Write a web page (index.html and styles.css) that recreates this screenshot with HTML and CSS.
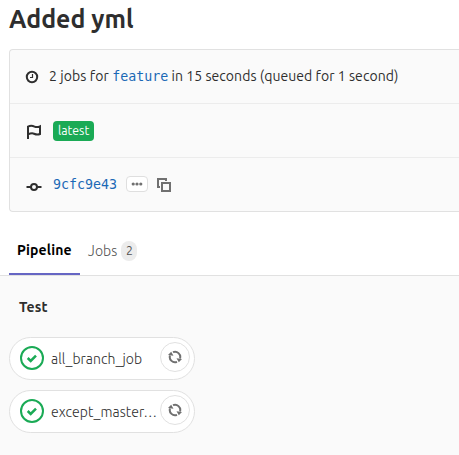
FILE: index.html
```html
<!DOCTYPE html>
<html lang="en">
<head>
<meta charset="utf-8">
<title>Added yml</title>
<link rel="stylesheet" href="styles.css">
</head>
<body>
<h1 class="title">Added yml</h1>
<section class="info">
  <div class="row">
    <svg class="icon clock" width="14" height="14" viewBox="0 0 14 14"><circle cx="7" cy="7" r="5.2"/><path d="M7.500 4v3.500H5"/></svg>
    <p class="summary">2 jobs for <a class="mono">feature</a> <span class="timing">in 15 seconds (queued for 1 second)</span></p>
  </div>
  <div class="row">
    <svg class="icon flag" width="16" height="16" viewBox="0 0 16 16"><path d="M2 15V2.6C5 1.2 6.500 1.700 8.500 2.600S12 3.200 14 2.300V10C11.500 11 10 10.500 8 9.700S4.500 9.300 2 10.400"/></svg>
    <span class="badge">latest</span>
  </div>
  <div class="row">
    <svg class="icon commit" width="16" height="16" viewBox="0 0 16 16"><circle cx="8" cy="8" r="3"/><path d="M0.500 8H5M11 8h4.500"/></svg>
    <a class="mono sha">9cfc9e43</a>
    <span class="more"><svg width="12" height="4" viewBox="0 0 12 4"><circle cx="2.200" cy="2" r="1.600"/><circle cx="6" cy="2" r="1.600"/><circle cx="9.800" cy="2" r="1.600"/></svg></span>
    <svg class="copy" width="14" height="14" viewBox="0 0 14 14"><path d="M3 9H1V1h8v2M5 5h8v8H5z"/></svg>
  </div>
</section>
<nav class="tabs">
  <a class="tab active"><span>Pipeline</span></a>
  <a class="tab"><span class="jobs">Jobs</span><span class="count">2</span></a>
</nav>
<main class="graph">
  <h2 class="stage">Test</h2>
  <div class="job">
    <svg class="check" width="24" height="24" viewBox="0 0 24 24"><circle cx="12" cy="12" r="11"/><path d="M7.700 12l3 3 5.300-5.300"/></svg>
    <span class="name">all_branch_job</span>
    <span class="retry"><svg width="14" height="14" viewBox="0 0 14 14"><path d="M5 2.200A5.200 5.200 0 0 1 12 8.500M9 11.800A5.200 5.200 0 0 1 2 5.500"/><path class="tip" d="M8.500 8.200l5.500.8-3.200 3.200zM5.500 5.800L0 5 3.200 1.800z"/></svg></span>
  </div>
  <div class="job">
    <svg class="check" width="24" height="24" viewBox="0 0 24 24"><circle cx="12" cy="12" r="11"/><path d="M7.700 12l3 3 5.300-5.300"/></svg>
    <span class="name">except_master…</span>
    <span class="retry"><svg width="14" height="14" viewBox="0 0 14 14"><path d="M5 2.200A5.200 5.200 0 0 1 12 8.500M9 11.800A5.200 5.200 0 0 1 2 5.500"/><path class="tip" d="M8.500 8.200l5.500.8-3.200 3.200zM5.500 5.800L0 5 3.200 1.800z"/></svg></span>
  </div>
</main>
</body>
</html>
```
FILE: styles.css
```css
* { box-sizing: border-box; }
body {
  margin: 0;
  height: 455px;
  overflow: hidden;
  display: flex;
  flex-direction: column;
  background: #fff;
  color: #2e2e2e;
  font: 14px/20px Ubuntu, "Noto Sans", sans-serif;
}
svg { flex: none; fill: none; }
.title { margin: 0; padding: 4px 0 0 9px; height: 49px; font-size: 24.9px; line-height: 30px; font-weight: 700; }
.info {
  margin-left: 9px;
  height: 163px;
  border: 1px solid #e1e1e1;
  border-right: 0;
  border-radius: 4px 0 0 4px;
  background: #fafafa;
}
.row { display: flex; align-items: center; height: 54px; padding-left: 15px; border-bottom: 1px solid #ececec; }
.row:last-child { border-bottom: 0; height: 53px; }
.icon { stroke: #2e2e2e; stroke-width: 2; }
.clock { margin-right: 10px; }
.clock path { stroke-width: 1.2; }
.flag, .commit { margin: 3px 11px 0 1px; }
.commit { margin-top: 5px; }
.summary { margin: 0; white-space: nowrap; letter-spacing: 0.09px; }
.timing { letter-spacing: 0.05px; }
.mono { color: #1b69b6; font: 13.3px/20px "DejaVu Sans Mono", monospace; letter-spacing: 0; }
.badge { height: 20px; padding: 0 5px; border-radius: 4px; background: #1aaa55; color: #fff; font-size: 12.250px; line-height: 19px; }
.more { display: flex; align-items: center; justify-content: center; width: 22px; height: 16px; margin: 0 9px; border: 1px solid #dfdfdf; border-radius: 4px; background: #fff; position: relative; top: -1px; }
.more svg { fill: #707070; }
.copy { stroke: #707070; stroke-width: 2; }
.tabs { display: flex; height: 64px; padding: 12px 0 0 9px; border-bottom: 1px solid #e1e1e1; }
.tab { display: flex; align-items: center; height: 51px; padding: 2px 8px 0; color: #707070; }
.active { width: 71px; color: #000; font-weight: 700; border-bottom: 2px solid #6666c4; letter-spacing: 0.15px; }
.jobs { letter-spacing: 0.1px; font-weight: 300; color: #505050; }
.count { width: 16px; height: 20px; margin-left: 4px; border-radius: 10px; background: #ececec; color: #505050; font-size: 12.250px; line-height: 20px; text-align: center; }
.graph { flex: 1; padding: 21px 0 0 9px; background: #fafafa; }
.stage { margin: 0 0 20px 10px; font-size: 14px; line-height: 20px; letter-spacing: 0.1px; }
.job { display: flex; align-items: center; width: 186px; height: 43px; margin-bottom: 10px; padding: 0 4px 2px 10px; border: 1px solid #e1e1e1; border-radius: 22px; background: #fff; }
.check { stroke: #1aaa55; stroke-width: 2; }
.check path { stroke-width: 2.500; }
.name { flex: 1; margin-left: 7px; padding-top: 3px; font-weight: 300; letter-spacing: 0.07px; white-space: nowrap; }
.retry { display: flex; align-items: center; justify-content: center; flex: none; width: 30px; height: 30px; padding-top: 1px; border: 1px solid #e1e1e1; border-radius: 50%; position: relative; top: -1px; }
.retry svg { stroke: #707070; stroke-width: 2; }
.retry .tip { fill: #707070; stroke: none; }
```
